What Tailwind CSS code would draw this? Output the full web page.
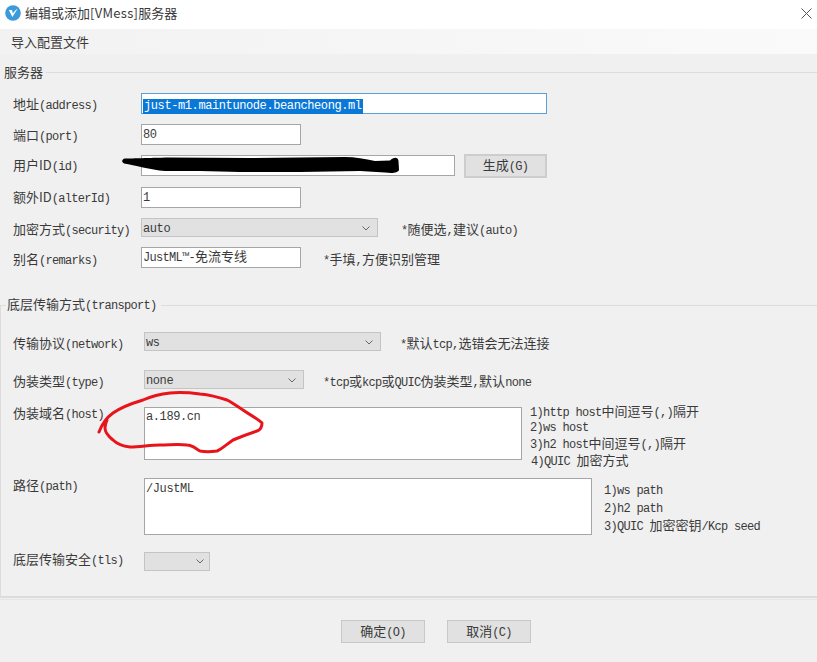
<!doctype html>
<html lang="zh">
<head>
<meta charset="utf-8">
<script src="https://cdn.jsdelivr.net/npm/@tailwindcss/browser@4"></script>
</head>
<body class="m-0 overflow-hidden">
<div class="relative w-[817px] h-[662px] flex flex-col overflow-hidden bg-[#f0f0f0] text-[#3a3a3a] text-[13px] leading-[16px] font-['Noto_Sans_CJK_SC',sans-serif]">

  <!-- title bar -->
  <div class="h-[29px] shrink-0 bg-white flex items-center pb-[4px] pl-[5px] pr-[5px]">
    <svg class="w-[16px] h-[16px] mr-[4px]" viewBox="0 0 16 16"><circle cx="8" cy="8" r="7.8" fill="#3b9ad9"/><path d="M3.8 5 L7.4 12 L12.6 3.8 C10.8 4.8 9.2 6.4 7.9 8.4 L7 5 Z" fill="#fff"/></svg>
    <span>编辑或添加<span class="tracking-[0.3px]">[VMess]</span>服务器</span>
    <svg class="ml-auto mt-[2px] w-[11px] h-[11px]" viewBox="0 0 11 11"><path d="M0.5 0.5 L10.5 10.5 M10.5 0.5 L0.5 10.5" stroke="#555" stroke-width="1" fill="none"/></svg>
  </div>

  <!-- menu -->
  <div class="h-[25px] shrink-0 bg-gradient-to-r from-[#f2f2f2] to-[#fafafa] pl-[11px] flex items-center">导入配置文件</div>

  <!-- server section -->
  <section class="shrink-0 pt-[10px]">
    <div class="flex items-center h-[16px] pl-[4px]">
      <span class="pr-[3px]">服务器</span><div class="flex-1 h-px bg-[#dcdcdc]"></div>
    </div>

    <div class="mt-[13px] pl-[13px] flex h-[21px]">
      <div class="w-[128px] pt-[3px]">地址<span class="font-['Liberation_Mono'] text-[12px] tracking-[-0.7px]">(address)</span></div>
      <div class="w-[406px] h-[21px] bg-white border border-[#5a9fd8] pl-[1px] pt-[2px]">
        <span class="inline-block h-[15px] leading-[14px] bg-[#0a78d7] text-white px-px font-['Liberation_Mono'] text-[12px] tracking-[-0.4px]">just-m1.maintunode.beancheong.ml</span>
      </div>
    </div>

    <div class="mt-[10px] pl-[13px] flex h-[21px]">
      <div class="w-[128px] pt-[3px]">端口<span class="font-['Liberation_Mono'] text-[12px] tracking-[-0.7px]">(port)</span></div>
      <div class="w-[160px] h-[21px] bg-white border border-[#a6a6a6] pl-[1px] pt-[2px] font-['Liberation_Mono'] text-[12px] tracking-[-0.4px]">80</div>
    </div>

    <div class="mt-[9px] pl-[13px] flex h-[24px]">
      <div class="w-[128px] pt-[3px]">用户ID<span class="font-['Liberation_Mono'] text-[12px] tracking-[-0.7px]">(id)</span></div>
      <div class="w-[314px] h-[21px] mt-px bg-white border border-[#a6a6a6]"></div>
      <button class="ml-[9px] w-[83px] h-[24px] bg-[#e1e1e1] border-2 border-[#cdcdcd]">生成<span class="font-['Liberation_Mono'] text-[12px] tracking-[-0.7px]">(G)</span></button>
    </div>

    <div class="mt-[9px] pl-[13px] flex h-[21px]">
      <div class="w-[128px] pt-[2px]">额外ID<span class="font-['Liberation_Mono'] text-[12px] tracking-[-0.7px]">(alterId)</span></div>
      <div class="w-[160px] h-[21px] bg-white border border-[#a6a6a6] pl-[1px] pt-[2px] font-['Liberation_Mono'] text-[12px] tracking-[-0.4px]">1</div>
    </div>

    <div class="mt-[10px] pl-[13px] flex h-[19px]">
      <div class="w-[128px] pt-[3px]">加密方式<span class="font-['Liberation_Mono'] text-[12px] tracking-[-0.7px]">(security)</span></div>
      <div class="w-[237px] h-[19px] bg-[#e1e1e1] border border-[#c4c4c4] pl-[1px] pt-[2px] flex items-center justify-between pr-[7px] font-['Liberation_Mono'] text-[12px] tracking-[-0.4px]">auto
        <svg class="w-[8px] h-[5px]" viewBox="0 0 8 5"><path d="M0.5 0.5 L4 4 L7.5 0.5" stroke="#666" fill="none"/></svg>
      </div>
      <div class="ml-[23px] pt-[3px]"><span class="font-['Liberation_Mono'] text-[12px] tracking-[-0.7px]">*</span>随便选<span class="font-['Liberation_Mono'] text-[12px] tracking-[-0.7px]">,</span>建议<span class="font-['Liberation_Mono'] text-[12px] tracking-[-0.7px]">(auto)</span></div>
    </div>

    <div class="mt-[11px] pl-[13px] flex h-[21px]">
      <div class="w-[128px] pt-[3px]">别名<span class="font-['Liberation_Mono'] text-[12px] tracking-[-0.7px]">(remarks)</span></div>
      <div class="w-[160px] h-[21px] bg-white border border-[#a6a6a6] pl-[1px] -mt-px"><span class="font-['Liberation_Mono'] text-[12px] tracking-[-0.7px]">JustML™-</span>免流专线</div>
      <div class="ml-[22px] pt-[3px]"><span class="font-['Liberation_Mono'] text-[12px] tracking-[-0.7px]">*</span>手填<span class="font-['Liberation_Mono'] text-[12px] tracking-[-0.7px]">,</span>方便识别管理</div>
    </div>
  </section>

  <!-- transport section -->
  <section class="mt-[28px] flex-1 min-h-0 flex flex-col">
    <div class="flex items-center h-[16px]">
      <div class="w-[6px] h-px bg-[#dcdcdc]"></div>
      <span class="px-px">底层传输方式<span class="font-['Liberation_Mono'] text-[12px] tracking-[-0.7px]">(transport)</span></span>
      <div class="flex-1 h-px bg-[#dcdcdc] ml-[3px]"></div>
    </div>

    <div class="-mt-[8px] h-[293px] shrink-0 border-l border-b-2 border-[#dcdcdc] pl-[12px] pt-[27px]">
      <div class="flex h-[19px]">
        <div class="w-[131px] pt-[3px]">传输协议<span class="font-['Liberation_Mono'] text-[12px] tracking-[-0.7px]">(network)</span></div>
        <div class="w-[237px] h-[19px] bg-[#e1e1e1] border border-[#c4c4c4] pl-[1px] pt-[2px] flex items-center justify-between pr-[7px] font-['Liberation_Mono'] text-[12px] tracking-[-0.4px]">ws
          <svg class="w-[8px] h-[5px]" viewBox="0 0 8 5"><path d="M0.5 0.5 L4 4 L7.5 0.5" stroke="#666" fill="none"/></svg>
        </div>
        <div class="ml-[19px] pt-[3px]"><span class="font-['Liberation_Mono'] text-[12px] tracking-[-0.7px]">*</span>默认<span class="font-['Liberation_Mono'] text-[12px] tracking-[-0.7px]">tcp,</span>选错会无法连接</div>
      </div>

      <div class="mt-[19px] flex h-[19px]">
        <div class="w-[131px] pt-[3px]">伪装类型<span class="font-['Liberation_Mono'] text-[12px] tracking-[-0.7px]">(type)</span></div>
        <div class="w-[160px] h-[19px] bg-[#e1e1e1] border border-[#c4c4c4] pl-[1px] pt-[2px] flex items-center justify-between pr-[7px] font-['Liberation_Mono'] text-[12px] tracking-[-0.4px]">none
          <svg class="w-[8px] h-[5px]" viewBox="0 0 8 5"><path d="M0.5 0.5 L4 4 L7.5 0.5" stroke="#666" fill="none"/></svg>
        </div>
        <div class="ml-[19px] pt-[3px]"><span class="font-['Liberation_Mono'] text-[12px] tracking-[-0.7px]">*tcp</span>或<span class="font-['Liberation_Mono'] text-[12px] tracking-[-0.7px]">kcp</span>或<span class="font-['Liberation_Mono'] text-[12px] tracking-[-0.7px]">QUIC</span>伪装类型<span class="font-['Liberation_Mono'] text-[12px] tracking-[-0.7px]">,</span>默认<span class="font-['Liberation_Mono'] text-[12px] tracking-[-0.7px]">none</span></div>
      </div>

      <div class="mt-[18px] flex h-[53px]">
        <div class="w-[131px] -mt-[2px]">伪装域名<span class="font-['Liberation_Mono'] text-[12px] tracking-[-0.7px]">(host)</span></div>
        <div class="w-[378px] h-[53px] bg-white border border-[#a6a6a6] pl-[1px] pt-px font-['Liberation_Mono'] text-[12px] tracking-[-0.4px]">a.189.cn</div>
        <div class="ml-[8px] -mt-[4px] w-[200px]">
          <div class="h-[16px]"><span class="font-['Liberation_Mono'] text-[12px] tracking-[-0.7px]">1)http host</span>中间逗号<span class="font-['Liberation_Mono'] text-[12px] tracking-[-0.7px]">(,)</span>隔开</div>
          <div class="h-[16px] pt-px font-['Liberation_Mono'] text-[12px] tracking-[-0.7px]">2)ws host</div>
          <div class="h-[16px]"><span class="font-['Liberation_Mono'] text-[12px] tracking-[-0.7px]">3)h2 host</span>中间逗号<span class="font-['Liberation_Mono'] text-[12px] tracking-[-0.7px]">(,)</span>隔开</div>
          <div class="h-[16px] mt-px pl-px"><span class="font-['Liberation_Mono'] text-[12px] tracking-[-0.7px]">4)QUIC </span>加密方式</div>
        </div>
      </div>

      <div class="mt-[18px] flex h-[57px]">
        <div class="w-[131px] -mt-[1px]">路径<span class="font-['Liberation_Mono'] text-[12px] tracking-[-0.7px]">(path)</span></div>
        <div class="w-[448px] h-[57px] bg-white border border-[#a6a6a6] pl-[1px] pt-[2px] font-['Liberation_Mono'] text-[12px] tracking-[-0.4px]">/JustML</div>
        <div class="ml-[12px] pt-[5px] w-[200px]">
          <div class="h-[18px] font-['Liberation_Mono'] text-[12px] tracking-[-0.7px]">1)ws path</div>
          <div class="h-[18px] font-['Liberation_Mono'] text-[12px] tracking-[-0.7px]">2)h2 path</div>
          <div class="h-[18px] -mt-[2px]"><span class="font-['Liberation_Mono'] text-[12px] tracking-[-0.7px]">3)QUIC </span>加密密钥<span class="font-['Liberation_Mono'] text-[12px] tracking-[-0.7px]">/Kcp seed</span></div>
        </div>
      </div>

      <div class="mt-[17px] flex h-[19px]">
        <div class="w-[131px] -mt-px">底层传输安全<span class="font-['Liberation_Mono'] text-[12px] tracking-[-0.7px]">(tls)</span></div>
        <div class="w-[66px] h-[19px] bg-[#e1e1e1] border border-[#c4c4c4] flex items-center justify-end pr-[5px]">
          <svg class="w-[8px] h-[5px]" viewBox="0 0 8 5"><path d="M0.5 0.5 L4 4 L7.5 0.5" stroke="#666" fill="none"/></svg>
        </div>
      </div>
    </div>

    <!-- footer buttons -->
    <div class="mt-px border-t border-[#e6e6e6] flex-1 pt-[20px] pl-[341px] flex gap-[22px] items-start">
      <button class="w-[84px] h-[23px] bg-[#e1e1e1] border border-[#c8c8c8]">确定<span class="font-['Liberation_Mono'] text-[12px] tracking-[-0.7px]">(O)</span></button>
      <button class="w-[84px] h-[23px] bg-[#e1e1e1] border border-[#c8c8c8]">取消<span class="font-['Liberation_Mono'] text-[12px] tracking-[-0.7px]">(C)</span></button>
    </div>
  </section>

  <!-- hand-drawn marks over the page -->
  <svg class="absolute left-0 top-0 w-[817px] h-[662px] pointer-events-none" viewBox="0 0 817 662">
    <path d="M125 158.500 C135 158.500 145 158 170 157.500 L250 158 L300 157.500 L345 157 C355 157 365 159 375 161 L390 160.500 C394 156.500 398 157 398.500 161 L399 170 C398 173 392 173.500 385 172.500 L360 171 L300 172 L240 172 L200 171 L165 171 C150 170 135 165 124 163.500 C121 162 122 159 125 158.500 Z" fill="#000"/>
    <path d="M99 432 C102 424 106 418 113 413 C123 406 133 403 143 400 C152 396 160 394 170 393 C182 392 192 393 200 394 C210 395 218 397 227 400 C233 403 238 407 243 410 C250 415 257 418 262 423 C262 427 260 430 257 431 C248 434 240 437 233 440 C227 444 222 449 217 451 C210 452 205 452 200 451 C195 448 192 445 187 445 C178 444 170 445 160 445 C150 445 140 447 130 447 C122 446 117 444 113 440 C108 436 105 432 105 428 C105 424 106 422 107 420" fill="none" stroke="#e8141c" stroke-width="3" stroke-linecap="round" stroke-linejoin="round"/>
  </svg>
</div>
</body>
</html>
